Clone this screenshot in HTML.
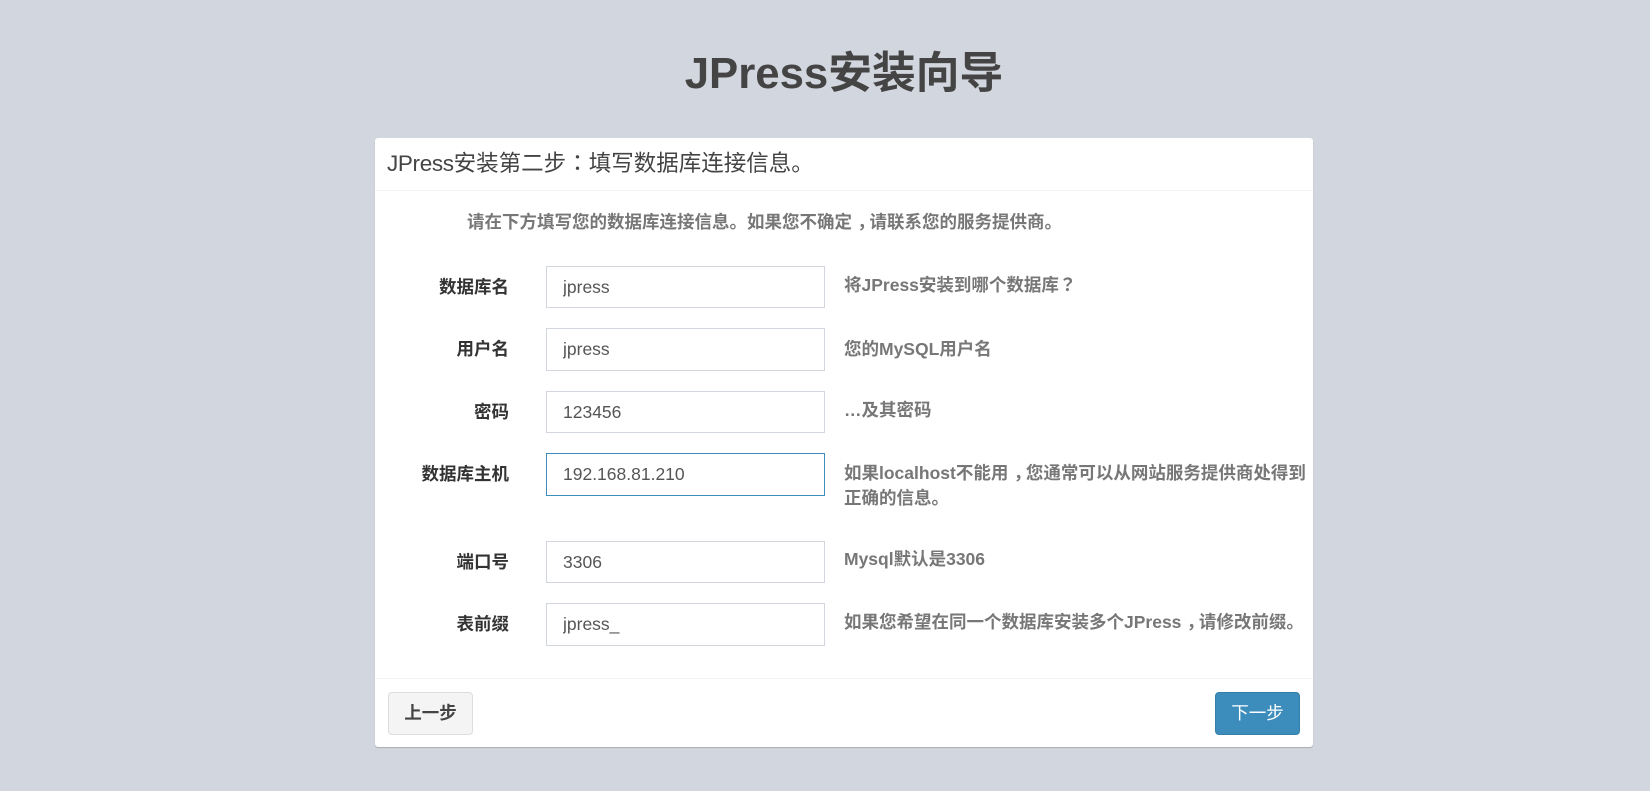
<!DOCTYPE html>
<html lang="zh-CN">
<head>
<meta charset="utf-8">
<title>JPress安装向导</title>
<style>
html,body{margin:0;padding:0;width:1650px;height:791px;overflow:hidden;background:#d2d6de;}
body{position:relative;font-family:"Liberation Sans","Noto Sans CJK SC",sans-serif;font-size:17.5px;color:#333;}
.a{position:absolute;white-space:nowrap;}
.p{font-family:"Noto Sans CJK TC",sans-serif;line-height:0;}
.c{position:relative;left:.3em;}
h1{position:absolute;left:0;width:1688px;top:45px;margin:0;text-align:center;font-size:43.75px;line-height:58px;font-weight:700;color:#444;}
.card{position:absolute;left:375px;top:138px;width:938px;height:609px;background:#fff;border-radius:3px;box-shadow:0 1px 1px rgba(0,0,0,.2);}
.hr{position:absolute;left:375px;width:938px;height:1px;background:#f4f4f4;}
.title{left:387px;top:149px;font-size:22.5px;line-height:30px;color:#444;font-weight:400;}
.title b{font-weight:400;letter-spacing:-.35px;}
.intro{left:467px;top:209px;line-height:26px;font-weight:700;color:#777;}
.lab{right:1141px;line-height:26px;font-weight:700;color:#333;text-align:right;}
.inp{position:absolute;left:546px;width:279px;box-sizing:border-box;border:1px solid #d2d6de;background:#fff;padding:0 0 0 16px;margin:0;font:17.5px "Liberation Sans","Noto Sans CJK SC",sans-serif;color:#555;outline:none;}
.inp.f{border-color:#3c8dbc;}
.hint{left:844px;line-height:25px;font-weight:700;color:#777;}
.btn{position:absolute;box-sizing:border-box;height:43px;top:692px;border-radius:4px;text-align:center;line-height:41px;font-size:17.5px;}
.prev{left:388px;width:85px;background:#f4f4f4;border:1px solid #ddd;color:#444;font-weight:700;}
.next{left:1215px;width:85px;background:#3c8dbc;border:1px solid #367fa9;color:#fff;font-weight:400;}
</style>
</head>
<body>
<h1>JPress安装向导</h1>
<div class="card"></div>
<div class="a title"><b>JPress</b>安装第二步<span class="p" lang="zh-TW">：</span>填写数据库连接信息。</div>
<div class="hr" style="top:190px"></div>
<div class="a intro">请在下方填写您的数据库连接信息。如果您不确定<span class="c">，</span>请联系您的服务提供商。</div>

<div class="a lab" style="top:274px">数据库名</div>
<input class="inp" style="top:266px;height:42px" value="jpress">
<div class="a hint" style="top:273px">将JPress安装到哪个数据库<span class="p" lang="zh-TW">？</span></div>

<div class="a lab" style="top:336px">用户名</div>
<input class="inp" style="top:328px;height:43px" value="jpress">
<div class="a hint" style="top:337px">您的MySQL用户名</div>

<div class="a lab" style="top:399px">密码</div>
<input class="inp" style="top:391px;height:42px" value="123456">
<div class="a hint" style="top:398px">…及其密码</div>

<div class="a lab" style="top:461px">数据库主机</div>
<input class="inp f" style="top:453px;height:43px" value="192.168.81.210">
<div class="a hint" style="top:461px">如果localhost不能用<span class="c">，</span>您通常可以从网站服务提供商处得到</div>
<div class="a hint" style="top:486px">正确的信息。</div>

<div class="a lab" style="top:549px">端口号</div>
<input class="inp" style="top:541px;height:42px" value="3306">
<div class="a hint" style="top:547px">Mysql默认是3306</div>

<div class="a lab" style="top:611px">表前缀</div>
<input class="inp" style="top:603px;height:43px" value="jpress_">
<div class="a hint" style="top:610px">如果您希望在同一个数据库安装多个JPress<span class="c">，</span>请修改前缀。</div>

<div class="hr" style="top:678px"></div>
<div class="btn prev">上一步</div>
<div class="btn next">下一步</div>
</body>
</html>
